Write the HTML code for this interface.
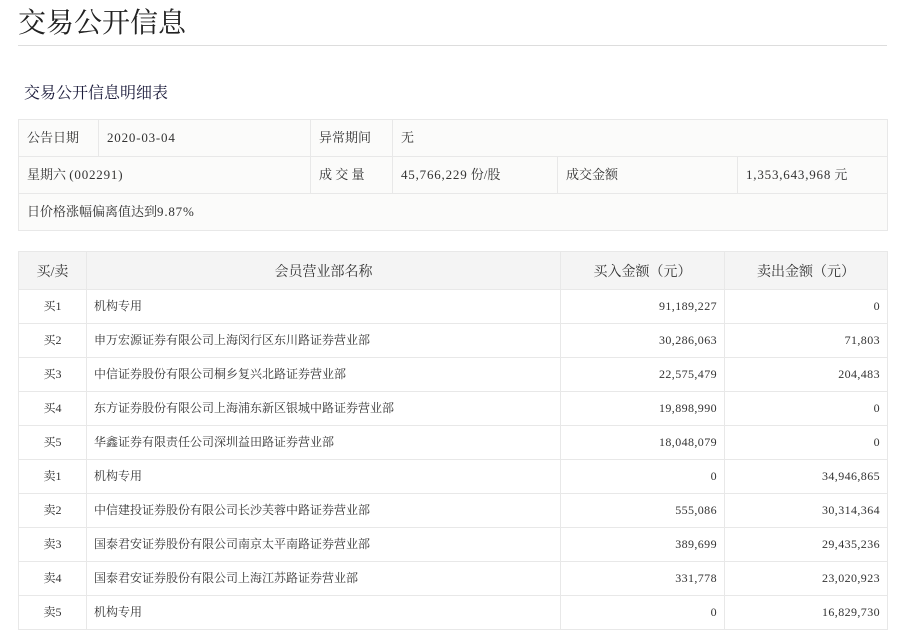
<!DOCTYPE html>
<html><head><meta charset="utf-8"><style>
body{margin:0;background:#fff;width:909px;height:638px;overflow:hidden;font-family:"Liberation Serif","Noto Serif CJK SC",serif;color:#333}
.t{position:absolute;left:18px;top:4px;font-size:28px;color:#222;line-height:40px}
.hr{position:absolute;left:18px;top:45px;width:869px;height:1px;background:#ddd}
.st{position:absolute;left:24px;top:83px;font-size:16px;color:#1a1a3a;line-height:22px}
table{position:absolute;left:18px;border-collapse:collapse;table-layout:fixed;width:869px}
td,th{border:1px solid #e8e8e8;padding:0 7px;font-weight:normal;white-space:nowrap;overflow:hidden;vertical-align:middle}
.info{top:119px;background:#fbfbfa;font-size:13px}
.info td{height:36px;line-height:36px;padding:0 8px}
.n{letter-spacing:0.8px}
.m{top:251px;font-size:12px}
.m th{background:#f4f4f4;height:37px;font-size:14px;text-align:center}
.m td{height:33px;line-height:33px}
.c{text-align:center}.r{text-align:right;letter-spacing:0.4px}
</style></head><body>
<div class="t">交易公开信息</div>
<div class="hr"></div>
<div class="st">交易公开信息明细表</div>
<table class="info">
<colgroup><col style="width:80px"><col style="width:212px"><col style="width:82px"><col style="width:165px"><col style="width:180px"><col style="width:150px"></colgroup>
<tr><td>公告日期</td><td><span class="n">2020-03-04</span></td><td>异常期间</td><td colspan="3">无</td></tr>
<tr><td colspan="2">星期六 <span class="n">(002291)</span></td><td>成 交 量</td><td><span class="n">45,766,229</span> 份/股</td><td>成交金额</td><td><span class="n">1,353,643,968</span> 元</td></tr>
<tr><td colspan="6">日价格涨幅偏离值达到<span class="n">9.87%</span></td></tr>
</table>
<table class="m">
<colgroup><col style="width:68px"><col style="width:474px"><col style="width:164px"><col style="width:163px"></colgroup>
<tr><th>买/卖</th><th>会员营业部名称</th><th>买入金额（元）</th><th>卖出金额（元）</th></tr>
<tr><td class="c">买1</td><td>机构专用</td><td class="r">91,189,227</td><td class="r">0</td></tr>
<tr><td class="c">买2</td><td>申万宏源证券有限公司上海闵行区东川路证券营业部</td><td class="r">30,286,063</td><td class="r">71,803</td></tr>
<tr><td class="c">买3</td><td>中信证券股份有限公司桐乡复兴北路证券营业部</td><td class="r">22,575,479</td><td class="r">204,483</td></tr>
<tr><td class="c">买4</td><td>东方证券股份有限公司上海浦东新区银城中路证券营业部</td><td class="r">19,898,990</td><td class="r">0</td></tr>
<tr><td class="c">买5</td><td>华鑫证券有限责任公司深圳益田路证券营业部</td><td class="r">18,048,079</td><td class="r">0</td></tr>
<tr><td class="c">卖1</td><td>机构专用</td><td class="r">0</td><td class="r">34,946,865</td></tr>
<tr><td class="c">卖2</td><td>中信建投证券股份有限公司长沙芙蓉中路证券营业部</td><td class="r">555,086</td><td class="r">30,314,364</td></tr>
<tr><td class="c">卖3</td><td>国泰君安证券股份有限公司南京太平南路证券营业部</td><td class="r">389,699</td><td class="r">29,435,236</td></tr>
<tr><td class="c">卖4</td><td>国泰君安证券股份有限公司上海江苏路证券营业部</td><td class="r">331,778</td><td class="r">23,020,923</td></tr>
<tr><td class="c">卖5</td><td>机构专用</td><td class="r">0</td><td class="r">16,829,730</td></tr>
</table>
</body></html>
